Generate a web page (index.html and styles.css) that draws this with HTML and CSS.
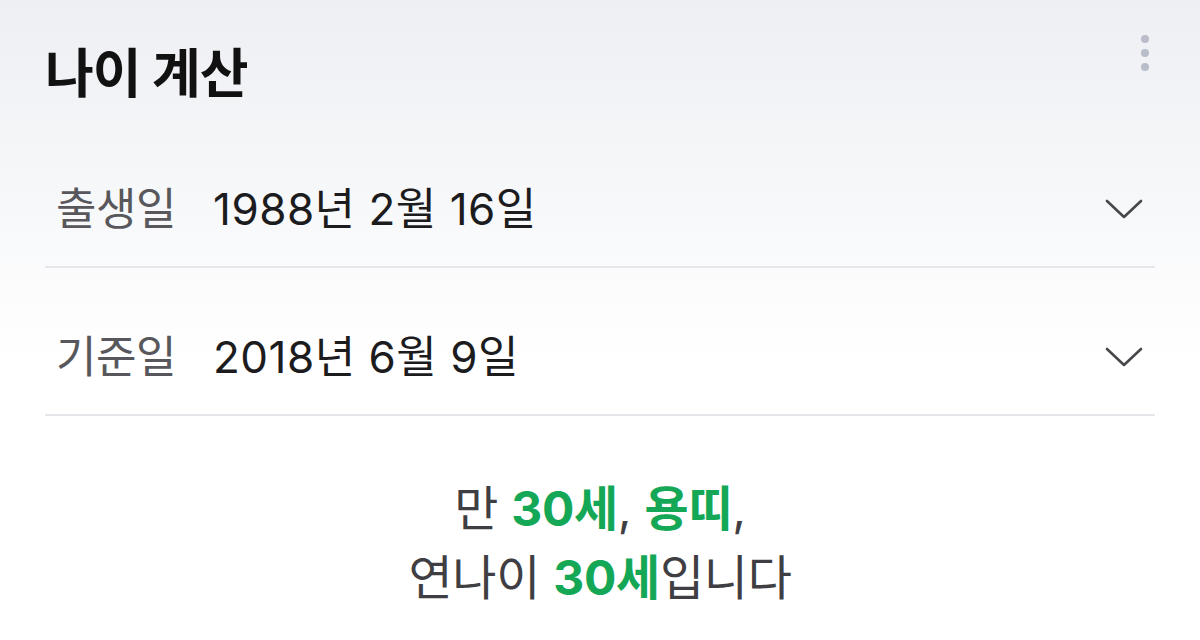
FILE: index.html
```html
<!DOCTYPE html>
<html lang="ko">
<head>
<meta charset="utf-8">
<link rel="stylesheet" href="styles.css">
</head>
<body>
<div class="page">
  <header class="header">
    <h1 class="title">나이 계산</h1>
    <button class="more" aria-label="더보기">
      <span class="dot"></span><span class="dot"></span><span class="dot"></span>
    </button>
  </header>
  <div class="row">
    <span class="label">출생일</span>
    <span class="value">1988년 2월 16일</span>
    <svg class="chev" width="38" height="22" viewBox="0 0 38 22"><path d="M2 3 L19 19 L36 3" fill="none" stroke="#48484c" stroke-width="2.6" stroke-linecap="round" stroke-linejoin="round"/></svg>
  </div>
  <div class="row">
    <span class="label">기준일</span>
    <span class="value">2018년 6월 9일</span>
    <svg class="chev" width="38" height="22" viewBox="0 0 38 22"><path d="M2 3 L19 19 L36 3" fill="none" stroke="#48484c" stroke-width="2.6" stroke-linecap="round" stroke-linejoin="round"/></svg>
  </div>
  <div class="result">
    <p class="line">만 <b class="hl">30세</b>, <b class="hl">용띠</b>,</p>
    <p class="line">연나이 <b class="hl">30세</b>입니다</p>
  </div>
</div>
</body>
</html>
```

FILE: styles.css
```css
html, body {
  margin: 0;
  padding: 0;
}
body {
  width: 1200px;
  height: 640px;
  overflow: hidden;
  background: linear-gradient(180deg, #eeeff3 0px, #f6f7f9 180px, #ffffff 360px);
  font-family: Inter, "Noto Sans CJK KR", sans-serif;
}
.page {
  padding: 0 45px;
}
.header {
  height: 120px;
  display: flex;
  align-items: flex-start;
  justify-content: space-between;
}
.title {
  margin: 44px 0 0 0;
  font-size: 53px;
  line-height: 60px;
  font-weight: 700;
  color: #111;
  letter-spacing: -1px;
}
.more {
  margin: 35px 6px 0 0;
  padding: 0;
  border: 0;
  background: none;
  display: flex;
  flex-direction: column;
  gap: 6px;
}
.dot {
  width: 8px;
  height: 8px;
  border-radius: 50%;
  background: #b9bdc9;
}
.row {
  display: flex;
  align-items: center;
  padding: 65px 12px 33px 11px;
  border-bottom: 2px solid #e5e5ea;
  font-size: 44px;
  line-height: 48px;
}
.label {
  color: #58585c;
  width: 157px;
  flex: none;
  letter-spacing: -0.5px;
}
.value {
  color: #1c1c1e;
  flex: 1;
  letter-spacing: 0.5px;
}
.chev {
  flex: none;
}
.result {
  margin-top: 58px;
  text-align: center;
}
.line {
  margin: 0;
  font-size: 48px;
  line-height: 69px;
  color: #3f3f43;
  letter-spacing: -0.3px;
}
.hl {
  color: #14a756;
  font-weight: 700;
}
```
